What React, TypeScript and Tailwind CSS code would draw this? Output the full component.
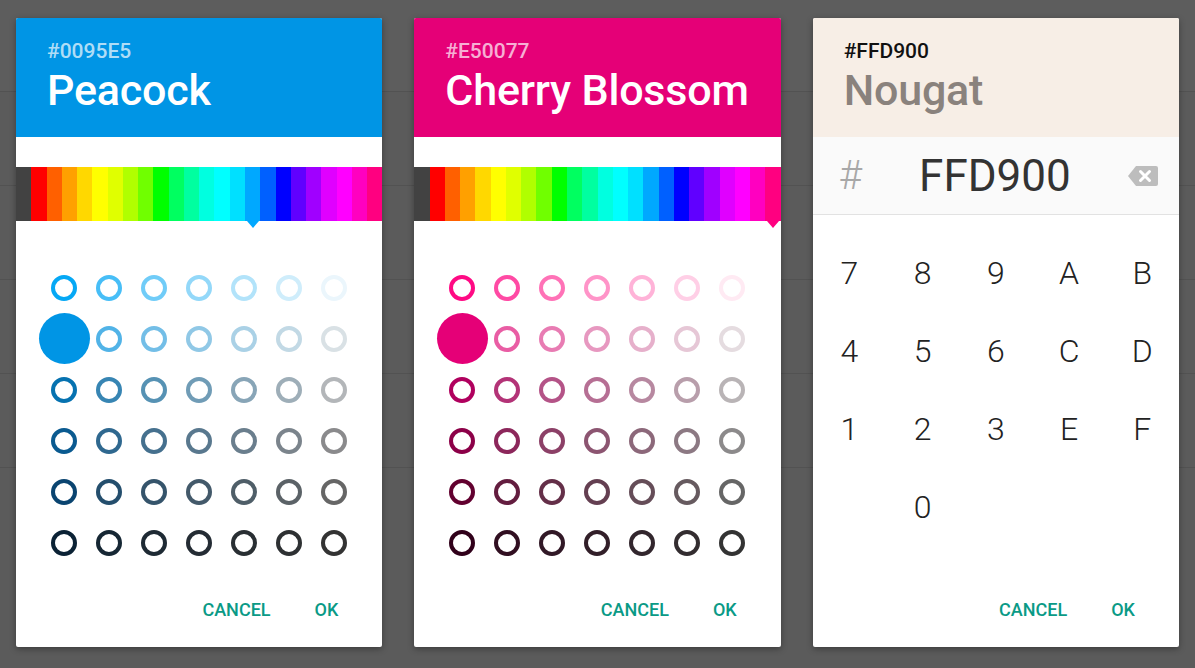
import React from "react"

const SPECTRUM = [
  "#424242", "#ff0000", "#ff6000", "#ffa000", "#ffd800", "#ffff00", "#e0ff00", "#b0ff00",
  "#70ff00", "#00ff00", "#00ff60", "#00ffa0", "#00ffe0", "#00ffff", "#00e0ff", "#00a8ff",
  "#0060ff", "#0000ff", "#6000ff", "#a000ff", "#e000ff", "#ff00ff", "#ff00c0", "#ff0080",
]

// per row: [first column, last column] — columns in between are blended
const BLUE_ROWS: [string, string][] = [
  ["#05a8f5", "#ebf6fc"],
  ["#1ba0e8", "#d9e1e5"],
  ["#0672b0", "#b3b6b9"],
  ["#0a5a90", "#8a8a8c"],
  ["#0a4470", "#666666"],
  ["#0b2235", "#333333"],
]

const PINK_ROWS: [string, string][] = [
  ["#ff0a84", "#ffeaf3"],
  ["#ea2a8c", "#e5dce0"],
  ["#b0005e", "#b9b4b6"],
  ["#8c0048", "#8c8a8b"],
  ["#62002f", "#666666"],
  ["#30001a", "#333333"],
]

function mix(a: string, b: string, t: number) {
  const pa = [1, 3, 5].map((i) => parseInt(a.slice(i, i + 2), 16))
  const pb = [1, 3, 5].map((i) => parseInt(b.slice(i, i + 2), 16))
  const c = pa.map((v, i) => Math.round(v + (pb[i] - v) * t))
  return `rgb(${c[0]}, ${c[1]}, ${c[2]})`
}

function Header({ hex, name, bg, hexClass, nameClass }: { hex: string; name: string; bg: string; hexClass: string; nameClass: string }) {
  return (
    <div className={`h-[119px] shrink-0 px-[31px] pt-[21px] ${bg}`}>
      <div className={`text-[21px] leading-[24px] font-medium ${hexClass}`}>{hex}</div>
      <div className={`mt-[3px] whitespace-nowrap text-[43px] leading-[48px] font-medium tracking-[-0.2px] ${nameClass}`}>{name}</div>
    </div>
  )
}

function Spectrum({ selected }: { selected: number }) {
  return (
    <div className="mt-[30px] flex h-[54px] shrink-0">
      {SPECTRUM.map((c, i) => (
        <div key={i} className="relative flex-1" style={{ backgroundColor: c }}>
          {i === selected && (
            <div
              className="absolute left-1/2 top-full h-0 w-0 -translate-x-1/2 border-x-[6px] border-t-[7px] border-x-transparent"
              style={{ borderTopColor: c }}
            />
          )}
        </div>
      ))}
    </div>
  )
}

function Swatches({ rows, base }: { rows: [string, string][]; base: string }) {
  return (
    <div className="mx-auto mt-[41px] grid w-[315px] grid-cols-7">
      {rows.map(([from, to], r) =>
        Array.from({ length: 7 }).map((_, c) => {
          const color = mix(from, to, Math.pow(c / 6, 0.7))
          return (
            <div key={`${r}-${c}`} className="flex h-[51px] items-center justify-center">
              {r === 1 && c === 0 ? (
                <div className="h-[51px] w-[51px] shrink-0 rounded-full" style={{ backgroundColor: base }} />
              ) : (
                <div className="h-[26px] w-[26px] rounded-full border-[4.5px]" style={{ borderColor: color }} />
              )}
            </div>
          )
        })
      )}
    </div>
  )
}

function Actions() {
  return (
    <div className="mt-auto flex h-[76px] items-center justify-end gap-[44px] pr-[44px] text-[18px] font-medium text-[#0a9a86]">
      <span>CANCEL</span>
      <span>OK</span>
    </div>
  )
}

function Card({ children }: { children: React.ReactNode }) {
  return (
    <div className="flex min-w-0 flex-1 flex-col overflow-hidden rounded-[2px] bg-white shadow-[0_2px_6px_rgba(0,0,0,0.35)]">
      {children}
    </div>
  )
}

function BackspaceIcon() {
  return (
    <svg width="30" height="20" viewBox="0 0 30 20">
      <path d="M8 0 H28 a2 2 0 0 1 2 2 V18 a2 2 0 0 1 -2 2 H8 L0 10 Z" fill="#bdbdbd" />
      <path d="M12.5 5.5 L21.5 14.5 M21.5 5.5 L12.5 14.5" stroke="#fff" strokeWidth="3" strokeLinecap="round" />
    </svg>
  )
}

const KEYS = ["7", "8", "9", "A", "B", "4", "5", "6", "C", "D", "1", "2", "3", "E", "F", "", "0", "", "", ""]

export default function App() {
  return (
    <div className="relative h-[668px] w-full overflow-hidden bg-[#5b5b5b] font-['Roboto',sans-serif]">
      {/* dimmed list behind the dialogs */}
      <div className="flex flex-col">
        <div className="h-[92px] border-b border-[#525252] bg-[#5d5d5d]" />
        <div className="h-[94px] border-b border-[#525252]" />
        <div className="h-[94px] border-b border-[#525252]" />
        <div className="h-[94px] border-b border-[#525252]" />
        <div className="h-[94px] border-b border-[#525252]" />
      </div>

      <div className="absolute inset-0 flex gap-[32px] px-[16px] pb-[21px] pt-[18px]">
        <Card>
          <Header hex="#0095E5" name="Peacock" bg="bg-[#0095e5]" hexClass="text-white/70" nameClass="text-white" />
          <Spectrum selected={15} />
          <Swatches rows={BLUE_ROWS} base="#0095e5" />
          <Actions />
        </Card>

        <Card>
          <Header hex="#E50077" name="Cherry Blossom" bg="bg-[#e50077]" hexClass="text-white/70" nameClass="text-white" />
          <Spectrum selected={23} />
          <Swatches rows={PINK_ROWS} base="#e50077" />
          <Actions />
        </Card>

        <Card>
          <Header hex="#FFD900" name="Nougat" bg="bg-[#f7eee6]" hexClass="text-[#111111]" nameClass="text-[#8a827d]" />
          <div className="flex h-[78px] shrink-0 items-center border-b border-[#e2e2e2] bg-[#fafafa] pl-[26px] pr-[21px]">
            <span className="text-[40px] font-light text-[#a8a8a8]">#</span>
            <span className="flex-1 text-center text-[44px] text-[#333333]">FFD900</span>
            <BackspaceIcon />
          </div>
          <div className="mt-[19px] grid grid-cols-5">
            {KEYS.map((k, i) => (
              <div key={i} className="flex h-[78px] items-center justify-center text-[32px] font-light text-[#222222]">
                {k}
              </div>
            ))}
          </div>
          <Actions />
        </Card>
      </div>
    </div>
  )
}
